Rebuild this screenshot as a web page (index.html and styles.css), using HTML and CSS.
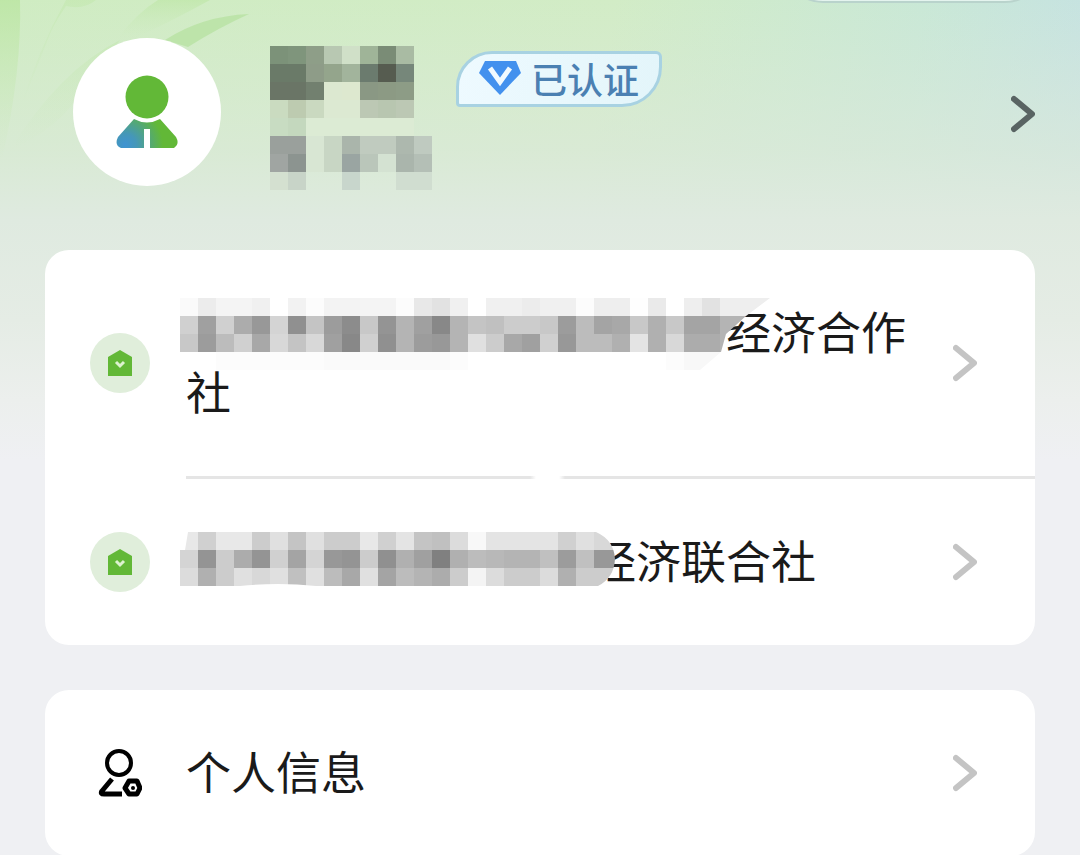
FILE: index.html
```html
<!DOCTYPE html>
<html lang="zh-CN">
<head>
<meta charset="utf-8">
<meta name="viewport" content="width=device-width, initial-scale=1">
<title>个人信息</title>
<link rel="stylesheet" href="styles.css">
</head>
<body>
<div class="page">
  <svg class="leaves" viewBox="0 0 360 200" aria-hidden="true">
    <defs>
      <linearGradient id="leafFade" x1="0" y1="0" x2="0" y2="1">
        <stop offset="0" stop-color="#b9e59f" stop-opacity=".75"/>
        <stop offset="1" stop-color="#c9e9b8" stop-opacity="0"/>
      </linearGradient>
    </defs>
    <path fill="url(#leafFade)" d="M0 0H20Q22 70 2 160L0 160Z"/>
    <path fill="url(#leafFade)" opacity=".45" d="M66 0H96Q84 10 66 6Q52 26 46 44L20 110Q38 50 66 0Z"/>
    <path fill="url(#leafFade)" opacity=".7" d="M158 0H210Q170 22 135 38H118Q138 12 158 0Z"/>
    <path fill="url(#leafFade)" opacity=".4" d="M120 40Q60 70 10 150Q60 130 90 80Z"/>
    <path fill="#b8e2a2" opacity=".8" d="M165 40Q202 16 249 14Q218 28 188 47Z"/>
  </svg>
  <div class="capsule" aria-hidden="true"></div>

  <header class="profile">
    <div class="avatar">
      <svg viewBox="0 0 62 74" width="62" height="74" aria-hidden="true">
        <defs>
          <radialGradient id="coat" gradientUnits="userSpaceOnUse" cx="9" cy="70" r="38">
            <stop offset="0" stop-color="#3f93d2"/>
            <stop offset=".3" stop-color="#4597b8"/>
            <stop offset="1" stop-color="#62b837"/>
          </radialGradient>
        </defs>
        <circle cx="31" cy="22" r="21.500" fill="#62b837"/>
        <path fill="url(#coat)" d="M18 44Q31 51 44 44L60 62Q64 69 58 73H34V54H28V73H5Q-2 70 2 62Z"/>
      </svg>
    </div>
    <div class="mosaic mosaic-name" data-mosaic="name"></div>
    <div class="badge">
      <svg viewBox="0 0 42 34" width="42" height="34" aria-hidden="true">
        <path fill="#4391ee" d="M6 0H37L42 12L21 34L0 12Z"/>
        <path fill="none" stroke="#f1faff" stroke-width="5" d="M11 7L21 21L31 7"/>
      </svg>
      <span>已认证</span>
    </div>
    <button class="open-profile" type="button" aria-label="个人主页">
      <svg class="chevron" viewBox="0 0 24 38" width="24" height="38"><path d="M3 4L21 19L3 34"/></svg>
    </button>
  </header>

  <main class="cards">
    <section class="card">
      <a class="row" href="#">
        <span class="house">
          <svg viewBox="0 0 26 26" width="26" height="26" aria-hidden="true">
            <path fill="#62b837" d="M13 0L25 7V26H1V7Z"/>
            <path fill="none" stroke="#dcf2cf" stroke-width="3" d="M9 12L13 16L17 12"/>
          </svg>
        </span>
        <span class="label"><span class="hidden-text hidden-long"><span class="mosaic" data-mosaic="long"></span></span>经济合作社</span>
        <svg class="chevron" viewBox="0 0 24 38" width="24" height="38" aria-hidden="true"><path d="M3 4L21 19L3 34"/></svg>
      </a>
      <div class="divider"></div>
      <a class="row" href="#">
        <span class="house">
          <svg viewBox="0 0 26 26" width="26" height="26" aria-hidden="true">
            <path fill="#62b837" d="M13 0L25 7V26H1V7Z"/>
            <path fill="none" stroke="#dcf2cf" stroke-width="3" d="M9 12L13 16L17 12"/>
          </svg>
        </span>
        <span class="label"><span class="hidden-text hidden-short"><span class="mosaic" data-mosaic="short"></span></span>经济联合社</span>
        <svg class="chevron" viewBox="0 0 24 38" width="24" height="38" aria-hidden="true"><path d="M3 4L21 19L3 34"/></svg>
      </a>
    </section>

    <section class="card">
      <a class="row" href="#">
        <span class="person">
          <svg viewBox="0 0 44 50" width="44" height="50" aria-hidden="true">
            <g fill="none" stroke="#000" stroke-width="4" stroke-linejoin="round">
              <circle cx="21" cy="15" r="12"/>
              <path stroke-width="5" d="M14 31L4 43Q2 46 6 46H24"/>
              <path stroke-width="5" d="M31 33H39L42 40L39 46H31L27 40Z"/>
            </g>
            <circle cx="35" cy="40" r="2"/>
          </svg>
        </span>
        <span class="label">个人信息</span>
        <svg class="chevron" viewBox="0 0 24 38" width="24" height="38" aria-hidden="true"><path d="M3 4L21 19L3 34"/></svg>
      </a>
    </section>
  </main>
</div>
<script src="mosaic.js"></script>
</body>
</html>
```
FILE: styles.css
```css
* {
  box-sizing: border-box;
}

body {
  margin: 0;
  background: #eff0f3;
  color: #1a1a1a;
  font-family: "Noto Sans CJK SC", "Noto Sans", sans-serif;
}

.page {
  position: relative;
  min-height: 100vh;
  overflow: hidden;
  background:
    linear-gradient(180deg, rgba(220, 232, 218, 0) 0, rgba(220, 233, 219, 0.7) 150px, #dfeae0 220px, #e5ece5 320px, #ecefed 400px, #eff0f3 460px),
    linear-gradient(100deg, #cfecc2 0%, #d2ecc6 50%, #c9e8d6 75%, #c4dfe8 98%);
}

.leaves {
  position: absolute;
  top: 0;
  left: 0;
  width: 360px;
  height: 200px;
}

.capsule {
  position: absolute;
  top: -77px;
  right: 35px;
  width: 262px;
  height: 80px;
  border: 2px solid #b9d3cc;
  border-radius: 40px;
  background: #e4f4ee;
}

.profile {
  position: relative;
  display: flex;
  align-items: flex-start;
  padding: 38px 45px 60px 73px;
}

.avatar {
  display: flex;
  align-items: center;
  justify-content: center;
  width: 148px;
  height: 148px;
  border-radius: 50%;
  background: #fff;
}

.mosaic svg {
  display: block;
}

.mosaic-name {
  width: 162px;
  height: 144px;
  margin: 8px 24px 0 49px;
}

.badge {
  display: flex;
  align-items: center;
  gap: 10px;
  height: 56px;
  margin-top: 13px;
  padding: 0 20px 2px;
  border: 3px solid #a8d2e2;
  border-radius: 36px 6px 40px 4px;
  background: linear-gradient(100deg, #eefaff, #e3f5fa);
  color: #4b80b2;
  font-size: 36px;
  font-weight: 500;
  line-height: 48px;
}

.open-profile {
  margin: 57px 0 0 auto;
  padding: 0;
  border: 0;
  background: none;
  color: #596463;
}

.chevron {
  display: block;
  flex: none;
  fill: none;
  stroke: currentColor;
  stroke-width: 6;
  stroke-linecap: round;
  stroke-linejoin: round;
}

.cards {
  position: relative;
  display: grid;
  gap: 45px;
  padding: 0 45px;
}

.card {
  border-radius: 24px;
  background: #fff;
}

.row {
  display: flex;
  align-items: center;
  padding: 51px 58px 51px 45px;
  color: #c4c4c4;
  text-decoration: none;
}

.house,
.person {
  display: flex;
  flex: none;
  align-items: center;
  justify-content: center;
  width: 60px;
  height: 60px;
  margin-right: 36px;
  border-radius: 50%;
}

.house {
  background: #e0eedb;
}

.label {
  flex: 1;
  margin-right: 20px;
  padding-bottom: 4px;
  color: #1a1a1a;
  font-size: 45px;
  line-height: 60px;
}

.hidden-text {
  position: relative;
  display: inline-block;
  height: 60px;
  vertical-align: top;
}

.hidden-long {
  width: 12em;
}

.hidden-short {
  width: 9em;
}

.hidden-text .mosaic {
  position: absolute;
  top: -3px;
  left: -6px;
}

.hidden-short .mosaic {
  top: 2px;
}

.divider {
  height: 3px;
  margin-left: 141px;
  background: linear-gradient(90deg, #e5e5e5 344px, #fff 350px, #fff 373px, #e5e5e5 379px);
}
```
FILE: mosaic.js
```javascript
// Colour cells that cover private names; "-" leaves a cell empty.
const CELL = 18;

const mosaics = {
  name: {
    rows: [
      "7c9279 7f957c 8e9e88 b8c8b2 d0e0c8 9fb498 7a8c76 a9bba3 -",
      "6a7a68 6a7a68 8e9c88 94a58c a2b49c 6b7b6e 565c50 76877a -",
      "6a7566 6a7566 72806f dce8d0 dde8cf 8a9884 8c9a84 8d9c86 -",
      "cadbc0 bdcbb0 cad9c0 dce9d2 dce9d2 bcc8b4 b8c6b0 bcc8b4 -",
      "c8dcc2 c4d8be dcebd4 dcebd4 dcebd4 dcebd4 dcebd4 dcebd4 -",
      "9aa09c 9aa09c d8e6d3 c8d6c4 aab5ab c0cbbf c0cbbf adb8ae bfcac0",
      "a0a5a2 8c9490 d8e6d3 c8d6c4 9aa5a2 bac6ba d4e2d2 aab5ac b4bfb6",
      "d4e0d0 c8d4c8 - - c8d6cc - - d0ddd0 d0ddd0"
    ]
  },
  long: {
    clip: "M0 0H590L566 18L546 36L541 54L520 72H0Z",
    rows: [
      "fafafa ececec f4f4f4 f4f4f4 f0f0f0 fff f2f2f2 fcfcfc f3f3f3 f3f3f3 f4f4f4 f4f4f4 fcfcfc e8e8e8 e2e2e2 f0f0f0 fff f0f0f0 f0f0f0 ececec f0f0f0 f0f0f0 fcfcfc eee eee fefefe eaeaea fff eee e2e2e2 eee eee eee",
      "d0d0d0 a0a0a0 d0d0d0 acacac 989898 d4d4d4 909090 c4c4c4 9c9c9c 8c8c8c c8c8c8 949494 b4b4b4 a0a0a0 888 b4b4b4 c4c4c4 c0c0c0 ccc ccc c8c8c8 9c9c9c bcbcbc a4a4a4 a8a8a8 c8c8c8 b0b0b0 c8c8c8 a4a4a4 a4a4a4 b4b4b4 b4b4b4 -",
      "c8c8c8 9c9c9c bcbcbc d0d0d0 a8a8a8 d8d8d8 c4c4c4 d8d8d8 a0a0a0 888 d0d0d0 909090 b4b4b4 9c9c9c 989898 b4b4b4 e0e0e0 ccc a8a8a8 a0a0a0 d0d0d0 989898 bcbcbc bcbcbc b0b0b0 e4e4e4 b0b0b0 d8d8d8 acacac acacac b4b4b4 - -",
      "- - fcfcfc fcfcfc fcfcfc fcfcfc fcfcfc fcfcfc fafafa fafafa fafafa fafafa fafafa fafafa fafafa fcfcfc - - - - - - - - - - - fcfcfc f8f8f8 f8f8f8"
    ]
  },
  short: {
    clip: "M8 0H416Q434 8 435 27Q434 46 418 54H136Q98 50 60 54H0V18H5Z",
    rows: [
      "e8e8e8 d0d0d0 e8e8e8 e8e8e8 ccc e0e0e0 c4c4c4 e0e0e0 ccc ccc e8e8e8 d0d0d0 e4e4e4 c4c4c4 c0c0c0 dcdcdc f8f8f8 e4e4e4 e4e4e4 e4e4e4 e4e4e4 d0d0d0 e0e0e0 d8d8d8 d8d8d8",
      "d4d4d4 949494 ccc acacac 949494 d0d0d0 a4a4a4 d4d4d4 989898 949494 ccc 909090 b0b0b0 a0a0a0 808080 b0b0b0 bcbcbc b8b8b8 b4b4b4 b4b4b4 c0c0c0 9c9c9c c0c0c0 989898 989898",
      "dcdcdc b0b0b0 ccc e0e0e0 d8d8d8 e0e0e0 c0c0c0 e0e0e0 bcbcbc a8a8a8 e0e0e0 a4a4a4 bcbcbc b4b4b4 acacac ccc f4f4f4 dcdcdc ccc ccc dcdcdc b0b0b0 ccc ccc ccc"
    ]
  }
};

document.querySelectorAll("[data-mosaic]").forEach((host) => {
  const key = host.dataset.mosaic;
  const { rows, clip } = mosaics[key];
  const grid = rows.map((row) => row.split(" "));
  const width = Math.max(...grid.map((row) => row.length)) * CELL;
  const height = grid.length * CELL;
  const cells = grid.flatMap((row, y) =>
    row.map((color, x) =>
      color === "-" ? "" :
        `<rect x="${x * CELL}" y="${y * CELL}" width="${CELL}" height="${CELL}" fill="#${color}"/>`
    )
  ).join("");
  const clipDef = clip ? `<clipPath id="clip-${key}"><path d="${clip}"/></clipPath>` : "";
  const clipUse = clip ? ` clip-path="url(#clip-${key})"` : "";
  host.innerHTML =
    `<svg width="${width}" height="${height}" viewBox="0 0 ${width} ${height}" shape-rendering="crispEdges" aria-hidden="true">` +
    `${clipDef}<g${clipUse}>${cells}</g></svg>`;
});
```
